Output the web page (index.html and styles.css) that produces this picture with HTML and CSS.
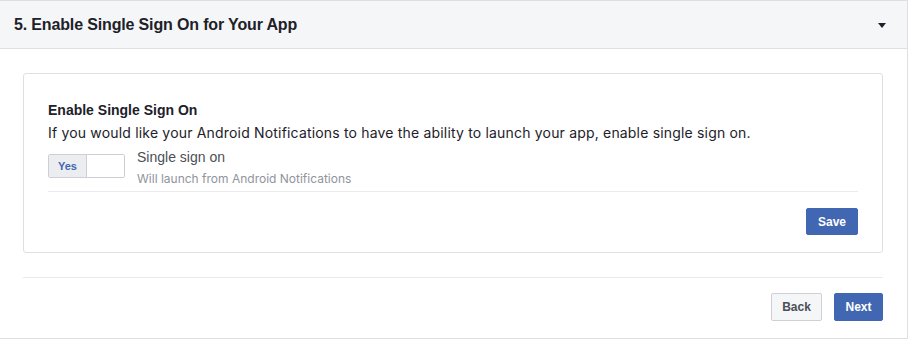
FILE: index.html
```html
<!DOCTYPE html>
<html lang="en">
<head>
    <meta charset="UTF-8">
    <title>Enable Single Sign On</title>
    <link rel="stylesheet" href="styles.css">
</head>
<body>

<div class="panel">
    <!-- step header -->
    <div class="panel-header">
        <h2>5. Enable Single Sign On for Your App</h2>
        <span class="caret"></span>
    </div>

    <div class="panel-body">
        <div class="card">
            <h3>Enable Single Sign On</h3>
            <p class="desc">If you would like your Android Notifications to have the ability to launch your app, enable single sign on.</p>

            <div class="setting-row">
                <div class="toggle">
                    <span class="toggle-on">Yes</span>
                    <span class="toggle-off"></span>
                </div>
                <div class="setting-text">
                    <div class="setting-label">Single sign on</div>
                    <div class="setting-hint">Will launch from Android Notifications</div>
                </div>
            </div>

            <div class="card-footer">
                <button class="btn btn-primary btn-save">Save</button>
            </div>
        </div>

        <div class="nav-buttons">
            <button class="btn btn-back">Back</button>
            <button class="btn btn-primary btn-next">Next</button>
        </div>
    </div>
</div>

</body>
</html>
```

FILE: styles.css
```css
body {
    margin: 0;
    font-family: "Liberation Sans", Arial, sans-serif;
    color: #1d2129;
    background-color: #fff;
}

.panel {
    width: 907px;
    height: 337px;
    border: 1px solid #dddfe2;
    border-left: none;
}

/* header */
.panel-header {
    height: 47px;
    display: flex;
    align-items: center;
    justify-content: space-between;
    padding: 0 21px 0 14px;
    background-color: #f5f6f7;
    border-bottom: 1px solid #dddfe2;
}

.panel-header h2 {
    margin: 0;
    font-size: 16px;
    font-weight: bold;
    letter-spacing: -0.15px;
    color: #1d2129;
}

.caret {
    width: 0;
    height: 0;
    border-left: 4px solid transparent;
    border-right: 4px solid transparent;
    border-top: 5px solid #1d2129;
    margin-top: 2px;
}

.panel-body {
    padding: 24px 24px 0 23px;
}

/* card */
.card {
    border: 1px solid #dddfe2;
    border-radius: 3px;
    padding: 27px 24px 17px 24px;
}

.card h3 {
    margin: 0;
    font-size: 14px;
    line-height: 18px;
    font-weight: bold;
    color: #1d2129;
}

.card .desc {
    margin: 5px 0 0 0;
    font-family: Inter, "Liberation Sans", sans-serif;
    font-size: 14px;
    line-height: 18px;
    letter-spacing: 0.18px;
}

.setting-row {
    display: flex;
    align-items: flex-start;
    padding-top: 6px;
    padding-bottom: 4px;
    border-bottom: 1px solid #e9ebee;
}

.toggle {
    display: flex;
    width: 75px;
    height: 22px;
    margin-top: 6px;
    border: 1px solid #ccd0d5;
    border-radius: 2px;
    overflow: hidden;
}

.toggle-on {
    width: 37px;
    background-color: #ebedf0;
    border-right: 1px solid #ccd0d5;
    color: #4267b2;
    font-size: 11px;
    font-weight: bold;
    line-height: 22px;
    text-align: center;
}

.toggle-off {
    flex: 1;
    background-color: #fff;
}

.setting-text {
    margin-left: 12px;
}

.setting-label {
    font-size: 14px;
    line-height: 18px;
    color: #4b4f56;
}

.setting-hint {
    margin-top: 5px;
    font-family: Inter, "Liberation Sans", sans-serif;
    font-size: 12px;
    line-height: 16px;
    color: #90949c;
}

.card-footer {
    display: flex;
    justify-content: flex-end;
    margin-top: 16px;
}

/* buttons */
.btn {
    height: 28px;
    padding: 0;
    font-family: "Liberation Sans", Arial, sans-serif;
    font-size: 12px;
    font-weight: bold;
    text-align: center;
    color: #4b4f56;
    background-color: #f5f6f7;
    border: 1px solid #ced0d4;
    border-radius: 2px;
}

.btn-primary {
    color: #fff;
    background-color: #4267b2;
    border-color: #4267b2;
}

.btn-save {
    height: 27px;
    width: 52px;
}

.btn-back {
    width: 51px;
}

.btn-next {
    width: 49px;
}

.nav-buttons {
    display: flex;
    justify-content: flex-end;
    gap: 12px;
    margin-top: 24px;
    padding-top: 15px;
    border-top: 1px solid #e9ebee;
}
```
